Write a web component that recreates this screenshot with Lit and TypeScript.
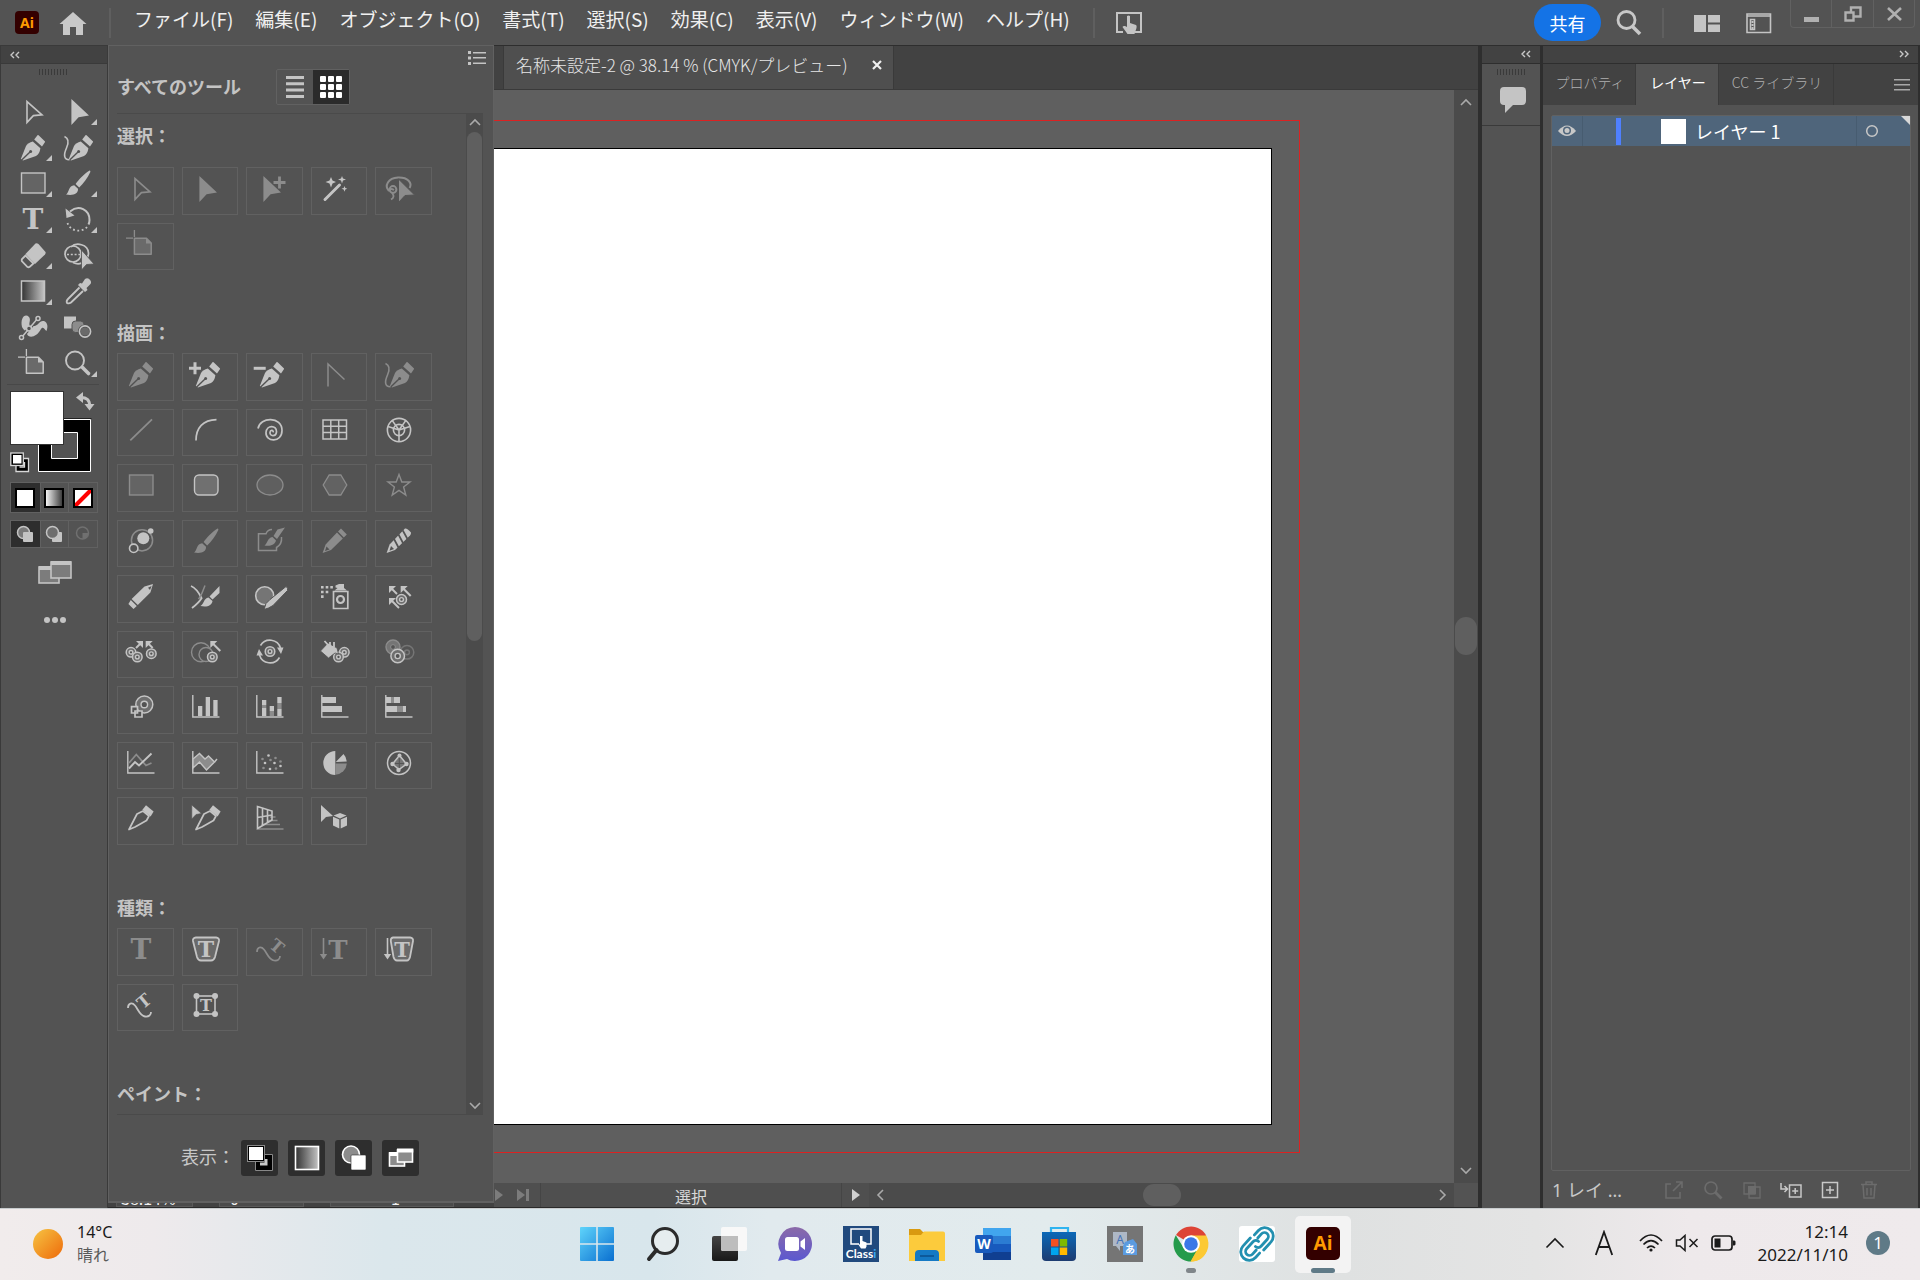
import { LitElement, html, svg, css, nothing, type SVGTemplateResult } from "lit";
import { customElement, property, state } from "lit/decorators.js";
import { classMap } from "lit/directives/class-map.js";

/* ------------------------------------------------------------------ */
/* Icon shapes, drawn in a 36 x 36 box with currentColor               */
/* ------------------------------------------------------------------ */

const penAt = (dx: number) => svg`<g transform="translate(${dx} 0)">
  <path fill="currentColor" d="M22.5 6.2Q23 5.8 23.6 6.3L29.8 12.2Q30.3 12.8 29.9 13.3L27 17.4L19.2 10.6z"/>
  <path fill="currentColor" d="M17.8 12.4L25.4 19.2Q24.6 25 21 27L8 31.6L5.8 30L11 17Q13 13.6 17.8 12.4z"/>
  <path stroke="#535353" stroke-width="1.4" d="M6.2 31.6L15 23"/><circle cx="15.6" cy="22.4" r="1.5" fill="#535353"/></g>`;

const ring = (x: number, y: number, r = 4.8) => svg`<circle cx=${x} cy=${y} r=${r} fill="#6e6e6e" stroke="currentColor" stroke-width="1.5"/>
  <circle cx=${x} cy=${y} r=${r / 2.6} fill="#535353" stroke="currentColor" stroke-width="1.4"/>`;

const arrowNW = (x: number, y: number, len = 9) => svg`<path fill="currentColor" d="M${x} ${y}h7l-7 7z"/>
  <path stroke="currentColor" stroke-width="2" d="M${x + 2} ${y + 2}l${len - 2} ${len - 2}"/>`;

const axes = svg`<path fill="none" stroke="currentColor" stroke-width="1.4" d="M4.8 6V28H31.5"/>`;

const glyphT = (x: number, y: number, size: number) =>
  svg`<text x=${x} y=${y} font-size=${size} font-weight="700" font-family="DejaVu Serif, Liberation Serif, serif" text-anchor="middle" fill="currentColor">T</text>`;

const brush = svg`<path fill="currentColor" d="M29.6 5.4C30.4 5.6 30.6 6.4 30.2 7.2C27.6 13 23.4 18.6 19.2 22.4L15.6 19C18.8 14.4 24.4 8.6 29.6 5.4z"/>
  <path fill="currentColor" d="M14.2 20.2L18 23.8C18.4 28.6 13.6 31 6 29.6C9 27.6 8.6 20.6 14.2 20.2z"/>`;

const knife = (dx: number) => svg`<g transform="translate(${dx} 0)">
  <path fill="none" stroke="currentColor" stroke-width="1.7" stroke-linejoin="round" d="M6 29.5L14 14L20 11L26 16L23.5 20.5L12 27z"/>
  <path fill="currentColor" d="M23 5.2L30.6 11.4L27.6 16.6L19.4 9.8z"/></g>`;

const cursor = svg`<path fill="currentColor" d="M11.4 6V32L18.6 24.2L29 22.4z"/>`;

const windows = svg`<rect x="2" y="12" width="20" height="16" fill="#7c7c7c" stroke="currentColor" stroke-width="1.6"/>
  <path fill="currentColor" d="M2 11h20v4h-20z"/>
  <rect x="14" y="7" width="20" height="16" fill="#7c7c7c" stroke="currentColor" stroke-width="1.6"/><path fill="currentColor" d="M14 6h20v4h-20z"/>`;

const artboard = svg`<path fill="none" stroke="currentColor" stroke-width="1.3" d="M3 12.2H10M11.4 4V11"/>
  <path fill="#6a6a6a" stroke="currentColor" stroke-width="1.5" stroke-linejoin="round" d="M11.4 12.2H23.5L28.2 17V28.2H11.4z"/><path fill="currentColor" d="M23 12V17.5H28.5z"/>`;

const SHAPES: Record<string, SVGTemplateResult> = {
  select: svg`<path fill="none" stroke="currentColor" stroke-width="1.6" d="M12 8.6V29.4L18.4 22.6L27 21.8z"/>`,
  direct: cursor,
  group: svg`${cursor}<path stroke="currentColor" stroke-width="2.8" d="M21.5 12.5h12M27.5 6.5v12"/>`,
  wand: svg`<path stroke="currentColor" stroke-width="3" stroke-linecap="round" d="M8 29.5L22.5 15"/>
    <path fill="currentColor" d="M14 7l1.5 3.5l3.5 1.5l-3.5 1.5l-1.5 4l-1.5-4l-4-1.5l4-1.5zM25 6l1 2.5l3 1l-3 1l-1 3l-1-3l-3-1l3-1zM27.5 16l.8 2l2 .8l-2 .8l-.8 2.2l-.8-2.2l-2.2-.8l2.2-.8z"/>`,
  lasso: svg`<path fill="none" stroke="currentColor" stroke-width="2" d="M8 21C3 16 7 8 17 7.6C27 7.2 31.5 13 28.6 18"/>
    <circle cx="12" cy="19.5" r="3.4" fill="none" stroke="currentColor" stroke-width="2"/><path fill="none" stroke="currentColor" stroke-width="1.8" d="M11 23Q14.5 27 10 29.5M7 20Q10 18 13 20"/>
    <path fill="currentColor" stroke="#535353" d="M17.5 9V32.5L24 25.5L33.6 25z"/>`,
  artboard,
  pen: penAt(0),
  penAdd: svg`${penAt(2)}<path stroke="currentColor" stroke-width="3" d="M1 12.3h12M7 6.3v12"/>`,
  penRemove: svg`${penAt(2)}<path stroke="currentColor" stroke-width="3" d="M1.7 12.3h12"/>`,
  anchor: svg`<path fill="none" stroke="currentColor" stroke-width="1.5" d="M11 30.5V8L27.5 23.5"/>`,
  curvature: svg`${penAt(3)}<path fill="none" stroke="currentColor" stroke-width="1.6" d="M4.5 7.5C9 9.5 8.5 14.5 6.5 19C3.6 25.5 3.6 31 9.5 30.8"/>`,
  line: svg`<path stroke="currentColor" stroke-width="1.8" d="M7.3 28.3L29 7.3"/>`,
  arc: svg`<path fill="none" stroke="currentColor" stroke-width="1.7" d="M8 28.5C8 16 15 7.8 28.5 7.6"/>`,
  spiral: svg`<path fill="none" stroke="currentColor" stroke-width="1.7" d="M6 16.5C8 4.5 30 4 30 18.5C30 31 13.5 30.5 14 20.5C14.5 12.5 25 13 24.5 19.8C24 25 17.6 24.5 18 20.4C18.4 17.5 21.6 18 21.2 20.4"/>`,
  grid: svg`<path fill="none" stroke="currentColor" stroke-width="1.5" d="M6 8H29.5V27H6zM13.8 8V27M21.7 8V27M6 14.3H29.5M6 20.6H29.5"/>`,
  polar: svg`<g fill="none" stroke="currentColor" stroke-width="1.6"><circle cx="18" cy="18" r="11.6"/><circle cx="18" cy="18" r="5.6"/><path d="M18 18V29.5M18 18L7 14.5M18 18L29 14.5M18 18L11.3 8.6M18 18L24.7 8.6"/></g>`,
  rect: svg`<rect x="6.5" y="8" width="23.5" height="20" fill="#646464" stroke="currentColor" stroke-width="1.4"/>`,
  rrect: svg`<rect x="6.5" y="8" width="23.5" height="20" rx="4.5" fill="#707070" stroke="currentColor" stroke-width="1.4"/>`,
  ellipse: svg`<ellipse cx="18" cy="18" rx="13" ry="10" fill="#5f5f5f" stroke="currentColor" stroke-width="1.3"/>`,
  polygon: svg`<path fill="#626262" stroke="currentColor" stroke-width="1.3" d="M12.2 8H23.8L29.8 18L23.8 28H12.2L6.2 18z"/>`,
  star: svg`<path fill="none" stroke="currentColor" stroke-width="1.4" d="M18 7.4L20.8 15H29L22.6 20L24.8 28L18 23.4L11.2 28L13.4 20L7 15H15.2z"/>`,
  flare: svg`<circle cx="19" cy="17.3" r="10.6" fill="none" stroke="#8c8c8c" stroke-width="1.5"/><circle cx="20.3" cy="15.3" r="6" fill="currentColor"/><circle cx="27.7" cy="8" r="2.8" fill="currentColor"/><circle cx="10.7" cy="25.3" r="4.2" fill="#535353" stroke="currentColor" stroke-width="1.6"/>`,
  brush,
  blobBrush: svg`<path fill="none" stroke="currentColor" stroke-width="1.5" d="M20 6.5C17 6.5 15 8 14 10.7H6.5V27.5H24.5V24.5C28 22.5 30 19 29.5 14"/>
    <path fill="currentColor" d="M33 4.5L25 16L21.5 13L25.5 6.5zM20.5 14L24 17.5C23 22 18 23.5 12.5 22.5C16 20 15 15 20.5 14z"/>`,
  pencil: svg`<path fill="currentColor" d="M24 5.6L29.8 11.4L26.8 14.4L21 8.6zM20 9.6L25.8 15.4L14 27L5.6 30L8.6 21.4z"/><path fill="#535353" d="M9.5 23.5L12.5 26.5L8 28z"/>`,
  crayon: svg`<path fill="currentColor" d="M24 5.6Q26 5 30 9.5Q30.3 11 29 12.4L14 27L5.6 30L8.6 21.4z"/>
    <path stroke="#535353" stroke-width="1.7" d="M13 16L17.5 24.5M17.5 11.5L22 20M21.8 7.5L26.5 16"/><path fill="#535353" d="M10 23L13 26L8.5 27.8z"/>`,
  eraserPath: svg`<path fill="currentColor" d="M30 6L27.4 14.6L14.8 27L8.6 21L21.500 8.600zM7.8 22L13.8 28L10.5 31L5.4 26z"/><path fill="#535353" d="M25 9.800L28.6 8L27 12z"/>`,
  join: svg`<path fill="none" stroke="currentColor" stroke-width="1.8" d="M3 8C8 10 11 15 13.5 20M4 30C8 27 12 23 14 19.5"/><path fill="none" stroke="#8c8c8c" stroke-width="1.5" d="M17 7.5C15 12 14 17 10.5 21"/>
    <path fill="currentColor" d="M31.5 8V15L24.5 21.5L21.5 18.5zM20.5 19.5L24.5 23C24 27.5 19 29.5 12.5 28C16 26 15.5 20.5 20.5 19.5z"/>`,
  shaper: svg`<circle cx="12.7" cy="17.8" r="9" fill="#757575" stroke="currentColor" stroke-width="1.6"/>
    <path fill="currentColor" stroke="#535353" d="M34 8.5Q36.5 10 35.5 12.5L21 27.5L16.5 30L12 31.5L14 25.5L18 21.5z"/>`,
  spray: svg`<path fill="none" stroke="currentColor" stroke-width="1.7" d="M16.5 13.5H30.8V30.5H16.5z"/><path fill="currentColor" d="M18.5 7.5L22 6H27V10L30 12.5H17.5L20.5 10L18.5 9.5z"/>
    <circle cx="23.5" cy="21.5" r="3.5" fill="none" stroke="currentColor" stroke-width="2.2"/>
    <path fill="currentColor" d="M4 8h2.6v2.6h-2.6zM8.7 8h2.6v2.6h-2.6zM13.3 8h2.6v2.6h-2.6zM4 12.7h2.6v2.6h-2.6zM8.7 12.7h2.6v2.6h-2.6zM4 17.3h2.6v2.6h-2.6z"/>`,
  shifter: svg`${arrowNW(8, 8, 8)}${arrowNW(19.7, 8, 10)}${arrowNW(8, 20, 10)}${ring(20.5, 21.5, 5)}`,
  scruncher: svg`${ring(8, 18.3)}${ring(14.3, 23)}${ring(28.3, 19.7)}${arrowNW(22.7, 7, 7)}<g transform="translate(42.7 0) scale(-1 1)">${arrowNW(22.7, 7, 7)}</g>`,
  sizer: svg`<g fill="#535353" stroke="#8c8c8c" stroke-width="1.4"><circle cx="13" cy="18.3" r="9.5"/><circle cx="18" cy="20.5" r="7"/></g>${ring(24.3, 23)}${arrowNW(22.3, 7, 10)}`,
  spinner: svg`${ring(18, 17.5)}<path fill="none" stroke="currentColor" stroke-width="1.6" d="M8.5 11.5A11 11 0 0 1 28.5 14M27.5 23.5A11 11 0 0 1 7.5 21"/><path fill="currentColor" d="M25 13.5H31.5L29 20zM11 21.5H4.5L7 15z"/>`,
  stainer: svg`${ring(27.3, 18.3)}${ring(21.5, 23)}<path fill="currentColor" stroke="#535353" stroke-width=".8" d="M11 9L20 14L21.5 20L18 19L11.5 24L3.5 17z"/><path fill="none" stroke="currentColor" stroke-width="1.8" d="M7.5 7L12 12M13 8V12M17 8L17 13"/>`,
  screener: svg`<circle cx="26" cy="18.3" r="6.8" fill="none" stroke="#757575" stroke-width="1.5"/><circle cx="26" cy="18.3" r="2.4" fill="none" stroke="#757575" stroke-width="1.5"/>
    <circle cx="12" cy="13" r="7" fill="#757575" stroke="#8c8c8c" stroke-width="1.4"/><circle cx="12" cy="13" r="2.4" fill="#535353" stroke="#8c8c8c"/>${ring(16.7, 22, 6.8)}`,
  styler: svg`${ring(21.3, 15.5, 8.5)}<path fill="#535353" stroke="currentColor" stroke-width="1.7" d="M12 22H19V28H12zM8.5 17.7H14.5V24H8.5z"/>`,
  bars: svg`${axes}<path fill="currentColor" d="M10 17h4.3v10h-4.3zM17.7 8h4.3v19h-4.3zM25.3 11h4.3v16h-4.3z"/>`,
  stackBars: svg`${axes}<path fill="currentColor" d="M10 11h4.3v5h-4.3zM10 19h4.3v8h-4.3zM17.7 17h4.3v5h-4.3zM25.3 8h4.3v6h-4.3zM25.3 20h4.3v7h-4.3z"/><path fill="#8c8c8c" d="M10 16h4.3v3h-4.3zM17.7 22h4.3v5h-4.3zM25.3 14h4.3v6h-4.3z"/>`,
  hbars: svg`${axes}<path fill="currentColor" d="M5 8h14v6h-14zM5 17h20v6h-20z"/>`,
  stackHbars: svg`${axes}<path fill="currentColor" d="M5 8h5v6h-5zM13 8h6v6h-6zM5 17h11v6h-11zM22 17h3v6h-3z"/><path fill="#8c8c8c" d="M10 8h3v6h-3zM16 17h6v6h-6z"/>`,
  lineChart: svg`${axes}<path fill="none" stroke="#8c8c8c" stroke-width="1.8" d="M6 18L13.3 9.5L23 20.5L28.5 18"/><path fill="none" stroke="currentColor" stroke-width="1.9" d="M6 23.5L12 17L16 20.5L28.5 8.5"/>`,
  areaChart: svg`${axes}<path fill="#8c8c8c" stroke="currentColor" stroke-width="1.4" d="M5 14L11.5 8.5L17 14L20.5 11L26.5 17L18.5 25L11.5 17L5 23z"/><path stroke="currentColor" stroke-width="1.4" d="M26.5 17L29 14"/>`,
  scatter: svg`${axes}<g fill="currentColor"><circle cx="16.5" cy="10.5" r="1.3"/><circle cx="22.5" cy="18" r="1.3"/><circle cx="18" cy="24" r="1.3"/><circle cx="28.5" cy="21" r="1.3"/><circle cx="13" cy="18" r="1.3"/></g><g fill="#8c8c8c"><circle cx="10.5" cy="14" r="1.3"/><circle cx="18.5" cy="15" r="1.3"/><circle cx="23.5" cy="13" r="1.3"/><circle cx="28.5" cy="16.5" r="1.3"/><circle cx="11.5" cy="23" r="1.3"/><circle cx="24" cy="23.5" r="1.3"/></g>`,
  pie: svg`<path fill="currentColor" d="M18.3 6A12 12 0 0 0 18.3 30zM18.8 17L26.5 9A12 12 0 0 1 29.8 16.5z"/><path fill="#8c8c8c" d="M18.3 18.5L29.8 18.5A12 12 0 0 1 18.3 29.8z"/>`,
  radar: svg`<circle cx="18" cy="18" r="11.5" fill="none" stroke="currentColor" stroke-width="1.5"/><path fill="#757575" stroke="currentColor" stroke-width="1.5" d="M18.5 10.5L25.5 19L18 24.5L11.5 19z"/><path stroke="#535353" d="M18.3 12V23M13 18.5H24"/><g fill="currentColor"><circle cx="18.5" cy="10.5" r="2"/><circle cx="25.5" cy="19" r="2.2"/><circle cx="17.5" cy="25" r="2.2"/><circle cx="11.5" cy="19" r="2.2"/></g>`,
  slice: knife(0),
  sliceSelect: svg`${knife(2)}<path fill="currentColor" stroke="#535353" stroke-width=".6" d="M3.8 5V19L8 14.5L13.5 13.5z"/>`,
  perspective: svg`<path fill="none" stroke="#8c8c8c" stroke-width="1.4" d="M6 29H31.5M9.5 24.5H28M15 20.5H25.5M18 17H23.5"/><path fill="none" stroke="currentColor" stroke-width="1.6" d="M5.5 6.5L20 11V20L5.5 28.5zM10.5 8.5V25M15.5 10V22M5.5 17.5L20 15"/>`,
  perspectiveSelect: svg`<path fill="currentColor" d="M4 5V22L9 17L16 16z"/><path fill="currentColor" d="M23 13L29.5 15.5L23 18.5L16.5 15.5zM16 16.7L22.3 19.5V28.5L16 25.5zM30 16.7L23.7 19.5V28.5L30 25.5z"/>`,
  type: glyphT(18, 28, 28),
  areaType: svg`<path fill="#6a6a6a" stroke="currentColor" stroke-width="1.8" stroke-linejoin="round" d="M8 6.5H28Q31.5 7 31 10L27 26Q26 29.5 23 29.5H13Q10 29.5 9 26L5 10Q4.5 7 8 6.5z"/>${glyphT(18, 26, 22)}`,
  pathType: svg`<g transform="rotate(40 23 16)">${glyphT(24, 20, 17)}</g><path fill="none" stroke="currentColor" stroke-width="1.7" d="M5 21C5 16 9 15 12 18.5C15 22 17 29 22 29.5C26 30 28 28 28 25"/>`,
  vType: svg`<path stroke="currentColor" stroke-width="1.6" d="M6.5 7V25"/><path fill="currentColor" d="M2.8 23h7.4l-3.7 5.5z"/>${glyphT(21, 28, 26)}`,
  vAreaType: svg`<path stroke="currentColor" stroke-width="1.6" d="M6.5 7V25"/><path fill="currentColor" d="M2.8 23h7.4l-3.7 5.5z"/>
    <path fill="#6a6a6a" stroke="currentColor" stroke-width="1.8" stroke-linejoin="round" d="M12 6.5H29Q32.5 7 32 10L29 26Q28 29.5 26 29.5H16Q13.5 29.5 12.5 26L9.8 10Q9.5 7 12 6.5z"/>${glyphT(21, 26, 21)}`,
  vPathType: svg`<g transform="rotate(-40 21 14)">${glyphT(21, 20, 17)}</g><path fill="none" stroke="currentColor" stroke-width="1.8" d="M5 21C5 16 9 15 12 18.5C15 22 17 29 22 29.5C26 30 28 28 28 25"/>`,
  touchType: svg`<rect x="8.5" y="9" width="18.5" height="18" fill="none" stroke="currentColor" stroke-width="1.6"/><g fill="currentColor"><circle cx="8.5" cy="9" r="3"/><circle cx="27" cy="9" r="3"/><circle cx="8.5" cy="27" r="3"/><circle cx="27" cy="27" r="3"/></g>${glyphT(18, 24, 16)}`,
  rotate: svg`<path fill="none" stroke="currentColor" stroke-width="2" d="M10 10.5C19 3 29.5 9 29.5 19C29.5 21 29 22.5 28.5 23.5"/><path fill="currentColor" d="M5.5 7.5L14.5 14.5L6.5 17z"/><path fill="none" stroke="currentColor" stroke-width="1.8" stroke-dasharray="1.8 2.6" d="M27 26C22 32 9 31 7 20"/>`,
  eraser: svg`<path fill="currentColor" d="M20.5 6.5Q22 6 23.5 7L30.5 15Q31 16 30 17.5L20 27L10.5 17z"/><path fill="none" stroke="currentColor" stroke-width="1.8" d="M10.5 18.5L18.5 26.5L14.5 30Q13.5 30.5 12.5 30L6.8 24Q6.5 23 7 22z"/>`,
  shapeBuilder: svg`<circle cx="13" cy="17" r="8" fill="none" stroke="currentColor" stroke-width="1.7"/><path fill="none" stroke="currentColor" stroke-width="1.7" d="M11 10C16 5 28 7 28.5 16Q28.5 21 24.5 24M13 25.5Q18 28 21.5 26"/><path stroke="currentColor" stroke-width="1.7" stroke-dasharray="2 1.8" d="M7 17.5H22"/><path fill="currentColor" stroke="#535353" stroke-width=".8" d="M21.5 13V33L26.5 27.5L34 27z"/>`,
  gradient: svg`<rect x="6.5" y="8" width="23" height="20" fill="url(#grad)" stroke="currentColor" stroke-width="1.5"/>`,
  eyedropper: svg`<path fill="currentColor" d="M25 6Q28 4 30.5 7.5Q32 10 29.5 12L26.5 15L27.5 17L25 19L18 12L20 10L22 10.5z"/><path fill="none" stroke="currentColor" stroke-width="1.8" stroke-linejoin="round" d="M19.5 14.5L8 26Q6 28 7 30Q9 31 11 29.5L23 18"/>`,
  puppet: svg`<path fill="currentColor" d="M7 18C5 9 10 4 14 8C17 12 11 17 18 17C24 17 24 11 29 12C33 14 33 18 31.5 22C29 20 28 17 26 20C22 28 14 30 12 25C11 21 9 22 7 18z"/><path stroke="#535353" stroke-width="3.5" d="M7 28L23 9"/><path stroke="currentColor" stroke-width="1.5" d="M7 28L23 9"/><g fill="#535353" stroke="currentColor" stroke-width="1.5"><circle cx="23" cy="9.5" r="2"/><circle cx="14" cy="19.5" r="2.5"/><circle cx="6.5" cy="28.5" r="2"/></g>`,
  blend: svg`<rect x="4" y="7.5" width="12" height="12" fill="currentColor"/><rect x="12" y="12" width="12" height="11.5" rx="3.5" fill="#8c8c8c" stroke="#535353"/><circle cx="25" cy="22.5" r="5.6" fill="#6a6a6a" stroke="#535353" stroke-width="3"/><circle cx="25" cy="22.5" r="5.6" fill="none" stroke="currentColor" stroke-width="1.6"/>`,
  zoom: svg`<circle cx="15" cy="15.5" r="9" fill="none" stroke="currentColor" stroke-width="1.9"/><path stroke="currentColor" stroke-width="3.6" stroke-linecap="round" d="M22.5 22.5L28.5 28.5"/>`,
  windows,
};

const gradDef = svg`<defs><linearGradient id="grad"><stop offset="0" stop-color="#333"/><stop offset="1" stop-color="#c4c4c4"/></linearGradient></defs>`;

const icon = (name: string) =>
  html`<svg width="36" height="36" viewBox="0 0 36 36" fill="none" aria-hidden="true">${name === "gradient" ? gradDef : nothing}${SHAPES[name]}</svg>`;

const chevron = (dir: "up" | "down" | "left" | "right") => {
  const d = { up: "M3 10L8 5L13 10", down: "M3 6L8 11L13 6", left: "M10 3L5 8L10 13", right: "M6 3L11 8L6 13" }[dir];
  return html`<svg width="16" height="16" viewBox="0 0 16 16" aria-hidden="true"><path d=${d} fill="none" stroke="#aaa" stroke-width="1.6"/></svg>`;
};

const grip = html`<svg class="grip" width="30" height="6" viewBox="0 0 30 6" aria-hidden="true">
  <path stroke="#3a3a3a" stroke-width="6" stroke-dasharray="1 2" d="M1 3H29"/></svg>`;

const doubleChevron = (flip = false) => html`<svg width="12" height="8" viewBox="0 0 12 8" aria-hidden="true">
  <path d=${flip ? "M2 1L5 4L2 7M7 1L10 4L7 7" : "M5 1L2 4L5 7M10 1L7 4L10 7"} fill="none" stroke="#c8c8c8" stroke-width="1.4"/></svg>`;

/* Shared control reset and tokens */
const base = css`
  :host {
    --bg: #535353;
    --dark: #424242;
    --line: #3a3a3a;
    --edge: #616161;
    --fg: #c4c4c4;
    --dim: #8c8c8c;
    box-sizing: border-box;
    font-family: "Noto Sans CJK JP", "Noto Sans", sans-serif;
    color: #e6e6e6;
  }
  *, *::before, *::after { box-sizing: border-box; }
  button, input, a {
    margin: 0; padding: 0; border: 0; background: none;
    color: inherit; font: inherit; text-decoration: none;
  }
  button { cursor: pointer; display: grid; place-items: center; }
  svg { display: block; flex: none; }
  h2, h3 { margin: 0; padding: 0; font: inherit; }
`;

/* ------------------------------------------------------------------ */
@customElement("menu-bar")
class MenuBar extends LitElement {
  static styles = [base, css`
    :host { display: flex; align-items: flex-start; height: 45px; background: var(--bg); padding-left: 15px; }
    .logo { width: 24px; height: 23px; margin: 11px 0 0; border-radius: 4px; background: #330000; color: #ff9a00;
      display: grid; place-items: center; font: 700 14px/1 "Noto Sans", sans-serif; }
    .home { margin: 11px 0 0 20px; }
    .sep { width: 2px; height: 30px; margin-top: 8px; background: #5f5f5f; }
    .sep.a { margin-left: 22px; }
    nav { display: flex; gap: 22px; margin-left: 23px; }
    nav button { font-size: 19px; line-height: 38px; white-space: nowrap; color: #f0f0f0; }
    .sep.b { margin-left: 23px; }
    .touch { margin: 11px 0 0 20px; }
    .grow { flex: 1; }
    .share { height: 37px; width: 67px; margin-top: 4px; border-radius: 19px; background: #1473e6; color: #fff; font-size: 18px; line-height: 36px; }
    .search { margin: 9px 20px 0 14px; }
    .arrange { margin: 13px 0 0 30px; }
    .switch { margin: 12px 18px 0 26px; }
    .win { display: flex; width: 125px; height: 28px; margin-right: 5px; border: 1px solid var(--edge); border-top: 0; border-radius: 0 0 4px 4px; }
    .win button { flex: 1; }
    .win button + button { border-left: 1px solid var(--edge); }
  `];
  private items = ["ファイル(F)", "編集(E)", "オブジェクト(O)", "書式(T)", "選択(S)", "効果(C)", "表示(V)", "ウィンドウ(W)", "ヘルプ(H)"];
  render() {
    return html`
      <span class="logo">Ai</span>
      <button class="home" aria-label="ホーム"><svg width="28" height="24" viewBox="0 0 28 24"><path fill="#c8c8c8" d="M14 1L27.5 13H24V24H17V16H11V24H4V13H.5z"/></svg></button>
      <span class="sep a"></span>
      <nav>${this.items.map((t) => html`<button>${t}</button>`)}</nav>
      <span class="sep b"></span>
      <button class="touch" aria-label="タッチ"><svg width="28" height="24" viewBox="0 0 28 24"><path fill="none" stroke="#c4c4c4" stroke-width="2" d="M8 21H2V2H26V21H20"/><path fill="#c4c4c4" d="M12 5Q13.5 4 15 5V12L21 14Q22 14.5 21.5 17L19.5 23H12.5L7.5 16Q8 14.5 10 15L12 16z"/></svg></button>
      <span class="grow"></span>
      <button class="share">共有</button>
      <button class="search" aria-label="検索"><svg width="27" height="27" viewBox="0 0 27 27"><circle cx="11.5" cy="11" r="8.5" fill="none" stroke="#c8c8c8" stroke-width="2.8"/><path stroke="#c8c8c8" stroke-width="3.6" d="M17.5 17.5L25 25"/></svg></button>
      <span class="sep"></span>
      <button class="arrange" aria-label="ドキュメントの配置"><svg width="26" height="20" viewBox="0 0 26 20"><path fill="#c4c4c4" d="M0 2H12V19H0zM14 2H26V9.5H14zM14 11.5H26V19H14z"/></svg></button>
      <button class="switch" aria-label="ワークスペース"><svg width="26" height="22" viewBox="0 0 26 22"><path fill="none" stroke="#c4c4c4" stroke-width="1.6" d="M1 2H24.5V20.5H1zM1 4H24.5M4.5 7.5H8.5V17.5H4.5z"/><path fill="#c4c4c4" d="M5.5 9h2v2h-2zM5.5 12h2v2h-2zM5.5 15h2v2h-2z"/></svg></button>
      <div class="win">
        <button aria-label="最小化"><svg width="20" height="18" viewBox="0 0 20 18"><path fill="#b0b0b0" d="M3 12h15v5H3z"/></svg></button>
        <button aria-label="元に戻す"><svg width="20" height="18" viewBox="0 0 20 18"><path fill="none" stroke="#b0b0b0" stroke-width="2.4" d="M3.5 7.5H11.5V15.5H3.5zM9 7V2.5H18.5V11.5H12"/></svg></button>
        <button aria-label="閉じる"><svg width="20" height="18" viewBox="0 0 20 18"><path stroke="#b0b0b0" stroke-width="2.6" d="M4 3L17 15M17 3L4 15"/></svg></button>
      </div>`;
  }
}

/* ------------------------------------------------------------------ */
@customElement("tool-bar")
class ToolBar extends LitElement {
  static styles = [base, css`
    :host { display: flex; flex-direction: column; width: 108px; background: var(--bg); border: 1px solid var(--line); border-bottom: 0; }
    .head { height: 18px; background: var(--dark); border-bottom: 1px solid var(--line); padding: 5px 0 0 8px; display: flex; align-items: flex-start; }
    .grip { margin: 5px 0 18px 37px; }
    .tools { display: grid; grid-template-columns: 45px 45px; grid-auto-rows: 36px; margin-left: 14px; color: var(--fg); }
    .tools button { position: relative; justify-items: start; }
    .more::after { content: ""; position: absolute; left: 31px; top: 26px; border-left: 6px solid transparent; border-bottom: 6px solid var(--fg); }
    hr { width: 92px; margin: 3px 0 5px 6px; border: 0; border-top: 1px solid #484848; }
    .colors { margin-left: 9px; }
    .modes { display: grid; grid-template-columns: repeat(3, 1fr); width: 88px; border: 1px solid var(--edge); margin: 8px 0 0 9px; height: 31px; }
    .modes.small { height: 28px; margin-top: 7px; }
    .modes button + button { border-left: 1px solid var(--edge); }
    .modes .on { background: #2e2e2e; }
    .screen { margin: 7px 0 0 36px; width: 36px; color: var(--fg); }
    .dots { margin: 25px 0 0 42px; width: 24px; }
  `];
  private tools: [string, string, boolean][] = [
    ["select", "選択ツール", false], ["direct", "ダイレクト選択ツール", true],
    ["pen", "ペンツール", true], ["curvature", "曲線ツール", false],
    ["rect", "長方形ツール", true], ["brush", "ブラシツール", true],
    ["type", "文字ツール", true], ["rotate", "回転ツール", true],
    ["eraser", "消しゴムツール", true], ["shapeBuilder", "シェイプ形成ツール", false],
    ["gradient", "グラデーションツール", true], ["eyedropper", "スポイトツール", false],
    ["puppet", "パペットワープツール", false], ["blend", "ブレンドツール", false],
    ["artboard", "アートボードツール", false], ["zoom", "ズームツール", true],
  ];
  render() {
    return html`
      <div class="head">${doubleChevron()}</div>
      ${grip}
      <div class="tools">${this.tools.map(([n, label, more]) => html`<button class=${classMap({ more })} aria-label=${label}>${icon(n)}</button>`)}</div>
      <hr />
      <svg class="colors" width="88" height="84" viewBox="0 0 88 84" role="img" aria-label="塗りと線">
        <path fill="#000" stroke="#fff" fill-rule="evenodd" d="M28.5 29.5H80.5V81.5H28.5zM41.5 42.5H67.5V68.5H41.5z"/>
        <path fill="none" stroke="#222" d="M27.5 28.5H81.5"/>
        <rect x=".5" y="1.5" width="53" height="53" fill="#fff" stroke="#333"/>
        <path fill="none" stroke="#c4c4c4" stroke-width="3" d="M70 7.5Q80 7 79.5 16"/><path fill="#c4c4c4" d="M73 2V13L66 7.5zM74.5 14H84.5L79.5 20.5z"/>
        <path fill="#000" stroke="#d8d8d8" stroke-width="1.3" d="M6 68.5H18.5V81.5H6z"/><rect x=".8" y="63" width="12.5" height="12.5" fill="#000" stroke="#d8d8d8" stroke-width="1.3"/><rect x="3" y="65" width="8.5" height="8.5" fill="#fff"/><path fill="none" stroke="#d8d8d8" stroke-width="1.3" d="M14.5 72V77H9.5"/>
      </svg>
      <div class="modes">
        <button class="on" aria-label="カラー"><svg width="20" height="20"><rect x="1" y="1" width="18" height="18" fill="#fff" stroke="#000" stroke-width="2"/></svg></button>
        <button aria-label="グラデーション"><svg width="20" height="20"><defs><linearGradient id="g2"><stop offset="0" stop-color="#fff"/><stop offset="1" stop-color="#333"/></linearGradient></defs><rect x="1" y="1" width="18" height="18" fill="url(#g2)" stroke="#000" stroke-width="2"/></svg></button>
        <button aria-label="なし"><svg width="20" height="20"><rect x="1" y="1" width="18" height="18" fill="#fff"/><path stroke="#f00" stroke-width="4" d="M2 18L18 2"/><rect x="1" y="1" width="18" height="18" fill="none" stroke="#000" stroke-width="2"/></svg></button>
      </div>
      <div class="modes small">
        <button class="on" aria-label="標準描画"><svg width="18" height="18"><circle cx="7.5" cy="7.5" r="6" fill="#7a7a7a" stroke="#c4c4c4" stroke-width="1.5"/><rect x="7" y="7" width="10" height="10" rx="1" fill="#c4c4c4"/></svg></button>
        <button aria-label="背面描画"><svg width="18" height="18"><rect x="7" y="7" width="10" height="10" rx="1" fill="#c4c4c4"/><circle cx="7.5" cy="7.5" r="6" fill="#6e6e6e" stroke="#c4c4c4" stroke-width="1.5"/></svg></button>
        <button aria-label="内側描画"><svg width="18" height="18"><circle cx="8.5" cy="8" r="6" fill="none" stroke="#707070" stroke-width="1.5"/><path fill="#707070" d="M8.5 8H14.5A6 6 0 0 1 8.5 14z"/></svg></button>
      </div>
      <button class="screen" aria-label="スクリーンモード">${icon("windows")}</button>
      <button class="dots" aria-label="ツールバーを編集"><svg width="24" height="8"><circle cx="4" cy="4" r="3" fill="#c4c4c4"/><circle cx="12" cy="4" r="3" fill="#c4c4c4"/><circle cx="20" cy="4" r="3" fill="#c4c4c4"/></svg></button>`;
  }
}

/* ------------------------------------------------------------------ */
/* "-" before a name marks a tool that is already in the toolbar       */
const GROUPS: { title: string; tools: string[] }[] = [
  { title: "選択：", tools: ["-select", "-direct", "-group", "wand", "-lasso", "-artboard"] },
  { title: "描画：", tools: [
    "-pen", "penAdd", "penRemove", "-anchor", "-curvature",
    "-line", "arc", "spiral", "grid", "polar",
    "-rect", "rrect", "-ellipse", "-polygon", "-star",
    "flare", "-brush", "-blobBrush", "-pencil", "crayon",
    "eraserPath", "join", "shaper", "spray", "shifter",
    "scruncher", "sizer", "spinner", "stainer", "screener",
    "styler", "bars", "stackBars", "hbars", "stackHbars",
    "lineChart", "areaChart", "scatter", "pie", "radar",
    "slice", "sliceSelect", "perspective", "perspectiveSelect"] },
  { title: "種類：", tools: ["-type", "areaType", "-pathType", "-vType", "vAreaType", "vPathType", "touchType"] },
  { title: "ペイント：", tools: [] },
];

@customElement("all-tools")
class AllTools extends LitElement {
  @state() private view: "list" | "grid" = "grid";
  static styles = [base, css`
    :host { display: flex; flex-direction: column; background: var(--bg); border: 1px solid var(--edge); border-width: 1px 1px 2px; padding: 0 10px 0 8px; }
    .opts { align-self: flex-end; margin: 5px -3px 0 0; }
    .top { display: flex; align-items: center; height: 36px; margin-top: 4px; color: var(--fg); }
    h2 { width: 159px; font-size: 18px; font-weight: 700; line-height: 34px; padding-bottom: 2px; }
    .toggle { display: flex; border: 1px solid var(--edge); border-radius: 2px; }
    .toggle button { width: 36px; height: 34px; }
    .toggle .on { background: #2b2b2b; color: #fff; }
    .body { flex: 1; min-height: 0; display: flex; margin-top: 8px; border: 1px solid #4a4a4a; border-width: 1px 0; }
    .scroll { flex: 1; overflow: hidden; }
    h3 { font-size: 18px; font-weight: 700; line-height: 26px; color: var(--fg); }
    section { padding-top: 49px; }
    section:first-child { padding-top: 8px; }
    .cells { display: grid; grid-template-columns: repeat(5, 1fr); gap: 8px; width: 315px; margin-top: 8px; }
    section:first-child .cells { margin-top: 19px; }
    .cell { aspect-ratio: 25 / 21; border: 1px solid var(--edge); color: var(--fg); place-items: start; padding: 2px 0 0 5px; }
    .cell.dim { color: var(--dim); }
    .bar { width: 17px; background: #4b4b4b; display: flex; flex-direction: column; align-items: center; }
    .bar button { height: 18px; width: 16px; }
    .thumb { flex: 508; width: 15px; border-radius: 8px; background: #5f5f5f; }
    .rest { flex: 454; }
    .foot { display: flex; align-items: center; height: 86px; padding: 0 0 1px 64px; gap: 10px; color: #c8c8c8; font-size: 18px; }
    .foot span { width: 50px; line-height: 32px; padding-bottom: 4px; white-space: nowrap; }
    .foot button { width: 37px; height: 36px; background: #2e2e2e; border-radius: 3px; }
  `];
  render() {
    return html`
      <button class="opts" aria-label="パネルメニュー"><svg width="18" height="14"><path fill="#c4c4c4" d="M0 0h3v3H0zM0 5.5h3v3H0zM0 11h3v3H0zM5 1h13v1.6H5zM5 6h13v1.6H5zM5 11.5h13v1.6H5z"/></svg></button>
      <div class="top">
        <h2>すべてのツール</h2>
        <div class="toggle">
          <button class=${classMap({ on: this.view === "list" })} aria-label="リスト表示" @click=${() => (this.view = "list")}><svg width="18" height="22"><path fill="currentColor" d="M0 0h18v3H0zM0 6.3h18v3H0zM0 12.6h18v3H0zM0 19h18v3H0z"/></svg></button>
          <button class=${classMap({ on: this.view === "grid" })} aria-label="グリッド表示" @click=${() => (this.view = "grid")}><svg width="22" height="22" fill="currentColor">${[0, 8, 16].map((y) => [0, 8, 16].map((x) => svg`<rect x=${x} y=${y} width="6" height="6" rx="1"/>`))}</svg></button>
        </div>
      </div>
      <div class="body">
        <div class="scroll">
          ${GROUPS.map((g) => html`<section>
            <h3>${g.title}</h3>
            <div class="cells">${g.tools.map((t) => {
              const dim = t.startsWith("-");
              const name = dim ? t.slice(1) : t;
              return html`<button class=${classMap({ cell: true, dim })} aria-label=${name}>${icon(name)}</button>`;
            })}</div>
          </section>`)}
        </div>
        <div class="bar">
          <button aria-label="上へ">${chevron("up")}</button>
          <div class="thumb"></div><div class="rest"></div>
          <button aria-label="下へ">${chevron("down")}</button>
        </div>
      </div>
      <div class="foot">
        <span>表示：</span>
        <button aria-label="塗りと線"><svg width="28" height="28"><path fill="#000" stroke="#888" d="M9.5 10.5H26.5V26.5H9.5z"/><path fill="none" stroke="#c8c8c8" stroke-width="3" d="M20 15V20H14"/><rect x="1.5" y="1.5" width="17" height="16" fill="#000" stroke="#888"/><rect x="3" y="3" width="14" height="13" fill="#fff"/></svg></button>
        <button aria-label="カラーモード"><svg width="26" height="26"><defs><linearGradient id="g3"><stop offset="0" stop-color="#333"/><stop offset="1" stop-color="#c4c4c4"/></linearGradient></defs><rect x="1.5" y="1.5" width="23" height="23" fill="url(#g3)" stroke="#fff" stroke-width="1.6"/></svg></button>
        <button aria-label="描画モード"><svg width="28" height="28"><circle cx="11" cy="10.5" r="8.5" fill="#8c8c8c" stroke="#fff" stroke-width="1.6"/><rect x="11" y="11" width="15" height="15" rx="1" fill="#fff" stroke="#2e2e2e" stroke-width=".6"/></svg></button>
        <button aria-label="スクリーンモード"><svg width="28" height="28"><rect x="2.5" y="9" width="15" height="13" fill="#8c8c8c" stroke="#fff" stroke-width="1.6"/><path fill="#fff" d="M2 8h16v4H2z"/><rect x="10.5" y="6" width="15" height="12" fill="#8c8c8c" stroke="#fff" stroke-width="1.6"/><path fill="#fff" d="M10 4.5h16.3v4H10z"/></svg></button>
      </div>`;
  }
}

/* ------------------------------------------------------------------ */
@customElement("document-view")
class DocumentView extends LitElement {
  static styles = [base, css`
    :host { display: flex; flex-direction: column; background: var(--dark); min-width: 0; }
    .tabs { height: 45px; display: flex; border-top: 1px solid #2e2e2e; border-bottom: 1px solid var(--line); padding-left: calc(var(--panel-w) + 9px); }
    .tab { display: flex; align-items: center; width: 391px; padding: 0 9px 6px 12px; background: #4f4f4f; border: 1px solid var(--line); border-width: 0 1px; height: 43px; font-size: 17px; font-weight: 300; white-space: nowrap; }
    .tab a { flex: 1; line-height: 28px; }
    .main { flex: 1; display: flex; min-height: 0; }
    .canvas { flex: 1; min-width: 0; background: #5f5f5f; padding: 30px 154px 30px 0; display: flex; }
    .bleed { flex: 1; border: 1px solid #dc2222; padding: 27px; display: flex; }
    .page { flex: 1; background: #fff; border: 1px solid #000; }
    .vbar { width: 24px; background: #4b4b4b; display: flex; flex-direction: column; }
    .vbar button, .hbar button { height: 26px; width: 24px; }
    .hbar button { height: 24px; }
    .vthumb { height: 38px; width: 22px; align-self: center; border-radius: 11px; background: #5f5f5f; }
    .f1 { flex: 501; } .f2 { flex: 503; }
    .status { height: 25px; display: flex; background: #4f4f4f; border-bottom: 1px solid #2a2a2a; font-size: 16px; }
    .fields { display: flex; width: var(--panel-w); padding-left: 8px; gap: 26px; background: #424242; }
    .fields input { border: 1px solid #5a5a5a; height: 24px; background: #4b4b4b; color: #f0f0f0; min-width: 0; padding: 6px 4px 0; line-height: 16px; }
    .zoom { width: 77px; } .rot { width: 85px; } .ab { width: 124px; }
    .fields .rot { padding-left: 10px; } .fields .ab { padding-left: 60px; }
    .nav { display: flex; align-items: center; width: 47px; gap: 12px; border-right: 1px solid #454545; }
    .cur { width: 301px; text-align: center; line-height: 26px; border-right: 1px solid #454545; color: #d8d8d8; }
    .play { width: 27px; }
    .hbar { flex: 1; display: flex; align-items: center; background: #4b4b4b; }
    .hthumb { width: 38px; height: 22px; border-radius: 11px; background: #5f5f5f; }
    .h1 { flex: 250; } .h2 { flex: 249; }
    .corner { width: 24px; background: var(--bg); }
  `];
  render() {
    return html`
      <div class="tabs"><div class="tab"><a href="#doc">名称未設定-2 @ 38.14 % (CMYK/プレビュー)</a>
        <button aria-label="閉じる"><svg width="14" height="14"><path stroke="#f0f0f0" stroke-width="2.2" d="M3 3L11 11M11 3L3 11"/></svg></button></div></div>
      <div class="main">
        <div class="canvas"><div class="bleed"><div class="page"></div></div></div>
        <div class="vbar">
          <button aria-label="上へ">${chevron("up")}</button><span class="f1"></span><span class="vthumb"></span><span class="f2"></span>
          <button aria-label="下へ">${chevron("down")}</button>
        </div>
      </div>
      <div class="status">
        <div class="fields">
          <input class="zoom" aria-label="ズーム" value="38.14%" />
          <input class="rot" aria-label="回転" value="0" />
          <input class="ab" aria-label="アートボード" value="1" />
        </div>
        <div class="nav">
          <button aria-label="次へ"><svg width="10" height="14"><path fill="#7c7c7c" d="M1 1L9 7L1 13z"/></svg></button>
          <button aria-label="最後へ"><svg width="14" height="14"><path fill="#7c7c7c" d="M1 1L9 7L1 13zM10 1h3v12h-3z"/></svg></button>
        </div>
        <div class="cur">選択</div>
        <button class="play" aria-label="表示項目"><svg width="10" height="14"><path fill="#d0d0d0" d="M1 1L9 7L1 13z"/></svg></button>
        <div class="hbar">
          <button aria-label="左へ">${chevron("left")}</button><span class="h1"></span><span class="hthumb"></span><span class="h2"></span>
          <button aria-label="右へ">${chevron("right")}</button>
        </div>
        <div class="corner"></div>
      </div>`;
  }
}

/* ------------------------------------------------------------------ */
@customElement("side-dock")
class SideDock extends LitElement {
  static styles = [base, css`
    :host { display: flex; background: #2e2e2e; padding: 1px 2px 0 4px; gap: 3px; }
    .col { width: 58px; background: var(--bg); display: flex; flex-direction: column; align-items: center; }
    .head { align-self: stretch; height: 18px; background: var(--dark); border-bottom: 1px solid #2e2e2e; display: flex; justify-content: flex-end; padding: 4px 8px 0 0; }
    .grip { margin: 5px 0 11px; }
    .note { align-self: stretch; height: 40px; border-bottom: 1px solid var(--line); align-content: start; padding-left: 4px; }
    .panel { width: 375px; background: var(--bg); display: flex; flex-direction: column; }
    .tabs { display: flex; height: 41px; background: var(--dark); align-items: stretch; font-size: 14px; color: #b0b0b0; font-weight: 300; }
    .tabs button { border-right: 1px solid var(--line); line-height: 34px; padding: 0 0 5px 2px; white-space: nowrap; }
    .p { width: 93px; } .l { width: 83px; } .c { width: 115px; }
    .tabs .on { background: var(--bg); color: #fff; font-weight: 400; }
    .tabs .m { flex: 1; border: 0; justify-items: end; padding: 0 8px 0 0; }
    .list { flex: 1; margin: 10px 7px 6px 8px; border: 1px solid var(--edge); border-radius: 2px; }
    .row { position: relative; display: flex; align-items: center; height: 30px; background: #4f657b; color: #fff; }
    .eye { width: 31px; height: 30px; border-right: 1px solid #475c70; }
    .mark { width: 5px; height: 27px; margin: 1px 40px 0 33px; background: #4f80ff; }
    .thumb { width: 25px; height: 25px; background: #fff; }
    .name { flex: 1; justify-items: start; margin-left: 9px; font-size: 18px; line-height: 28px; }
    .target { width: 54px; height: 30px; border-left: 1px solid #475c70; padding-right: 24px; }
    .row::after { content: ""; position: absolute; right: 0; top: 0; border-top: 9px solid #d8d8d8; border-left: 9px solid transparent; }
    .foot { display: flex; align-items: center; height: 25px; margin-bottom: 6px; padding: 0 30px 0 9px; color: #c8c8c8;
      font: 18px/24px "Noto Sans", "Noto Sans CJK JP", sans-serif; }
    .foot span { flex: 1; white-space: nowrap; }
    .foot button { width: 39px; color: #6c6c6c; }
    .foot .on { color: #c8c8c8; }
  `];
  render() {
    return html`
      <div class="col">
        <div class="head">${doubleChevron()}</div>${grip}
        <button class="note" aria-label="コメント"><svg width="28" height="28"><path fill="#c4c4c4" d="M5 1H23Q27 1 27 5V15Q27 19 23 19H14L6 27V19H5Q1 19 1 15V5Q1 1 5 1z"/></svg></button>
      </div>
      <div class="panel">
        <div class="head">${doubleChevron(true)}</div>
        <div class="tabs">
          <button class="p">プロパティ</button><button class="l on">レイヤー</button><button class="c">CC ライブラリ</button>
          <button class="m" aria-label="パネルメニュー"><svg width="16" height="12"><path fill="#a8a8a8" d="M0 0h16v1.6H0zM0 5h16v1.6H0zM0 10h16v1.6H0z"/></svg></button>
        </div>
        <div class="list">
          <div class="row">
            <button class="eye" aria-label="表示の切り替え"><svg width="20" height="14"><path fill="#c8c8c8" d="M1 7Q10-4 19 7Q10 17 1 7z"/><circle cx="10" cy="6.5" r="4" fill="#4f657b"/><circle cx="10" cy="6.5" r="2.5" fill="#c8c8c8"/></svg></button>
            <span class="mark"></span><span class="thumb"></span>
            <button class="name">レイヤー 1</button>
            <button class="target" aria-label="ターゲット"><svg width="14" height="14"><circle cx="7" cy="7" r="5.3" fill="none" stroke="#c8c8c8" stroke-width="1.5"/></svg></button>
          </div>
        </div>
        <div class="foot">
          <span>1 レイ …</span>
          <button aria-label="書き出し"><svg width="22" height="20" fill="none" stroke="currentColor" stroke-width="1.6"><path d="M8 4H3V18H17V12M10 11L19 2M13 2H19V8"/></svg></button>
          <button aria-label="オブジェクトの位置"><svg width="20" height="20" fill="none" stroke="currentColor"><circle cx="8" cy="8" r="6" stroke-width="1.7"/><path stroke-width="2.8" d="M12 12L18.5 18.5"/></svg></button>
          <button aria-label="クリッピングマスク"><svg width="20" height="20"><path fill="none" stroke="currentColor" stroke-width="1.3" d="M2 3H13V14H2zM7 7H18V18H7z"/><path fill="currentColor" d="M6 6h8v8H6z"/></svg></button>
          <button class="on" aria-label="サブレイヤー"><svg width="24" height="20" fill="none" stroke="currentColor" stroke-width="1.5"><path d="M10.5 5H22V17H10.5zM16.2 8V14M13.2 11H19.2M2 3V9H8M5.5 6L8.5 9L5.5 12"/></svg></button>
          <button class="on" aria-label="新規レイヤー"><svg width="18" height="18" fill="none" stroke="currentColor" stroke-width="1.5"><path d="M1.5 1.5H16.5V16.5H1.5zM9 5V13M5 9H13"/></svg></button>
          <button aria-label="削除"><svg width="18" height="20" fill="none" stroke="currentColor" stroke-width="1.5"><path d="M1 4.5H17M6 4V2H12V4M3 5L4 18H14L15 5M7 8V15.5M11 8V15.5"/></svg></button>
        </div>
      </div>`;
  }
}

/* ------------------------------------------------------------------ */
const APPS: { name: string; art: SVGTemplateResult; run?: "idle" | "active" }[] = [
  { name: "スタート", art: svg`<defs><linearGradient id="w" x1="0" y1="0" x2="1" y2="1"><stop offset="0" stop-color="#5fd4fb"/><stop offset="1" stop-color="#0a6fd0"/></linearGradient></defs><path fill="url(#w)" d="M2 1H17.2V17.2H1V2Q1 1 2 1zM18.8 1H34Q35 1 35 2V17.2H18.8zM1 18.8H17.2V35H2Q1 35 1 34zM18.8 18.8H35V34Q35 35 34 35H18.8z"/>` },
  { name: "検索", art: svg`<circle cx="20" cy="15" r="12.5" fill="#e6edef" stroke="#2b2b2b" stroke-width="3"/><path stroke="#2b2b2b" stroke-width="4" stroke-linecap="round" d="M11.5 24L4 33"/>` },
  { name: "タスクビュー", art: svg`<defs><linearGradient id="tv" x2="0" y2="1"><stop stop-color="#444"/><stop offset="1" stop-color="#181818"/></linearGradient></defs><rect x="1" y="10" width="26" height="25" rx="2" fill="url(#tv)"/><rect x="10" y="1" width="26" height="24" rx="2" fill="#f8f8f8"/><path fill="#bdbdbd" d="M10 10H27V25H12Q10 25 10 23z"/>` },
  { name: "チャット", art: svg`<defs><linearGradient id="ch" x2="0" y2="1"><stop stop-color="#8b6aa8"/><stop offset="1" stop-color="#5b58d0"/></linearGradient></defs><path fill="url(#ch)" d="M18 1A17 17 0 1 1 10 33L1 35L4 27A17 17 0 0 1 18 1z"/><rect x="8" y="11" width="14" height="14" rx="2.5" fill="#fff"/><path fill="#fff" d="M23.5 15.5L28 12V24L23.5 20.5z"/>` },
  { name: "Classi", art: svg`<rect width="36" height="36" fill="#214a7e"/><path fill="none" stroke="#fff" stroke-width="1.5" d="M16 18H8V3H28V18H23"/><path fill="#fff" d="M17 10h2.5v5l4 1.5v4l-1 2h-4.5l-3-4.5l2 .5z"/><text x="18" y="32" text-anchor="middle" font-size="12" font-weight="700" font-family="Lato, sans-serif" fill="#fff">Class<tspan fill="#3aa9f5">i</tspan></text>` },
  { name: "エクスプローラー", art: svg`<path fill="#d99a10" d="M0 3H11L14 6H35V14H0z"/><path fill="#fccb3c" d="M0 9H12L15 5.5H34Q36 5.5 36 7.5V35H0z"/><path fill="#1579c4" d="M6 35V28Q6 24 10 24H26Q30 24 30 28V35z"/><path stroke="#0b4f8c" stroke-width="1.5" d="M11 30H25"/>` },
  { name: "Word", art: svg`<path fill="#41a5ee" d="M8 2H36V10H8z"/><path fill="#2b7cd3" d="M8 10H36V18H8z"/><path fill="#185abd" d="M8 18H36V26H8z"/><path fill="#103f91" d="M8 26H36V34H8z"/><rect y="9" width="18" height="18" rx="2" fill="#185abd"/><text x="9" y="23" font-size="14" font-weight="700" font-family="Open Sans, sans-serif" text-anchor="middle" fill="#fff">W</text>` },
  { name: "Microsoft Store", art: svg`<defs><linearGradient id="ms" x2="0" y2="1"><stop stop-color="#0b68b8"/><stop offset="1" stop-color="#1d3c70"/></linearGradient></defs><path fill="none" stroke="#2fb4f0" stroke-width="2.2" d="M10 8V2H27V8"/><path fill="url(#ms)" d="M1 6H35V31Q35 35 31 35H5Q1 35 1 31z"/><path fill="#f25022" d="M10 13h7.5v7.5H10z"/><path fill="#7fba00" d="M18.7 13h7.5v7.5h-7.5z"/><path fill="#00a4ef" d="M10 21.5h7.5V29H10z"/><path fill="#ffb900" d="M18.7 21.5h7.5V29h-7.5z"/>` },
  { name: "IME", art: svg`<rect width="36" height="36" fill="#757575"/><path fill="#aeb8c6" d="M6 6H20V20H13L13 25L9 20H6z"/><text x="13" y="18" font-size="12" font-family="Noto Sans, sans-serif" text-anchor="middle" fill="#4472b8">A</text><path fill="#5b9be0" d="M18 16L26 13L30 18V29H16V20z"/><text x="23" y="27" font-size="10" font-weight="700" font-family="Noto Sans CJK JP, sans-serif" text-anchor="middle" fill="#fff">あ</text>` },
  { name: "Chrome", run: "idle", art: svg`<path fill="#dd4436" d="M18 18L3 9A17.5 17.5 0 0 1 33.2 9.5z"/><path fill="#fcc934" d="M18 18V9.5H33.2A17.5 17.5 0 0 1 18 35.5z"/><path fill="#259b4b" d="M18 35.5A17.5 17.5 0 0 1 2.8 9.3L11 22.5L25 22z"/><path fill="#fcc934" d="M25.5 22L17.5 35.5Q30 35.5 34 24z"/><circle cx="18" cy="18" r="8.8" fill="#fff"/><circle cx="18" cy="18" r="6.8" fill="#3b78e7"/>` },
  { name: "リンク", art: svg`<rect width="36" height="36" rx="3" fill="#fff"/><g transform="rotate(-48 18 18)" fill="none" stroke="#2390b0" stroke-width="2.8" stroke-linecap="round"><path d="M13 21.5H7.5A4 4 0 0 1 7.5 13.5H17A4 4 0 0 1 21 17.5"/><path d="M23 14.5H28.5A4 4 0 0 1 28.5 22.5H19A4 4 0 0 1 15 18.5"/><path d="M13 26H7A8.5 8.5 0 0 1 7 9H18M23 10H29A8.5 8.5 0 0 1 29 27H18"/></g>` },
  { name: "Illustrator", run: "active", art: svg`<rect x="1" y="1" width="34" height="33" rx="5" fill="#330000"/><text x="18" y="24" font-size="19" font-weight="700" font-family="Open Sans, sans-serif" text-anchor="middle" fill="#ff9a00">Ai</text>` },
];

@customElement("task-bar")
class TaskBar extends LitElement {
  static styles = [base, css`
    :host { display: grid; grid-template-columns: 1fr auto 1fr; align-items: start; height: 72px; color: #1a1a1a;
      background: linear-gradient(90deg, #f1ecec 0%, #eeeaec 8%, #dbe7ec 20%, #d8e6ec 34%, #e1eaee 40%, #e2ebed 55%, #dfe1e1 70%, #e4e4e4 80%, #eee9eb 88%, #efeaec 100%);
      border-top: 1px solid #c8ccce; font-family: "Noto Sans", "Noto Sans CJK JP", sans-serif; }
    .weather { display: flex; align-items: center; gap: 14px; padding: 12px 0 0 33px; justify-self: start; text-align: left; }
    .weather span { display: grid; font-size: 16px; line-height: 23px; }
    .weather small { font-size: 16px; color: #5a5a5a; }
    .apps { display: flex; gap: 10px; padding-top: 7px; }
    .app { position: relative; width: 56px; height: 57px; border-radius: 5px; padding-bottom: 2px; }
    .app.active { background: #f3f3f3; }
    .app::after { position: absolute; bottom: 0; height: 5px; border-radius: 3px; }
    .app.idle::after { content: ""; width: 10px; background: #80868a; }
    .app.active::after { content: ""; width: 24px; background: #5f7a87; }
    .tray { justify-self: end; display: flex; align-items: center; padding: 11px 30px 0 0; }
    .tray .clock { display: grid; justify-items: end; font-size: 17px; line-height: 23px; margin: 0 18px 0 21px; }
    .ime { margin: 0 26px 0 30px; }
    .quick { display: flex; gap: 12px; }
    .badge { width: 24px; height: 24px; border-radius: 50%; background: #5f7a87; color: #fff; font-size: 17px; line-height: 24px; }
  `];
  render() {
    return html`
      <button class="weather"><svg width="30" height="30"><defs><linearGradient id="sun" x2="1" y2="1"><stop stop-color="#f6c443"/><stop offset="1" stop-color="#ee6a0a"/></linearGradient></defs><circle cx="15" cy="15" r="15" fill="url(#sun)"/></svg>
        <span>14°C<small>晴れ</small></span></button>
      <div class="apps">${APPS.map((a) => html`<button class="app ${a.run ?? ""}" aria-label=${a.name}><svg width="36" height="36" viewBox="0 0 36 36">${a.art}</svg></button>`)}</div>
      <div class="tray">
        <button aria-label="隠れているインジケーター"><svg width="20" height="12"><path fill="none" stroke="#1a1a1a" stroke-width="1.6" d="M1.5 10.5L10 2L18.5 10.5"/></svg></button>
        <button class="ime" aria-label="入力モード"><svg width="18" height="26"><path fill="none" stroke="#1a1a1a" stroke-width="1.8" d="M.8 25L9 2L17.2 25M4 17H14"/></svg></button>
        <button class="quick" aria-label="クイック設定">
          <svg width="24" height="20" fill="none" stroke="#1a1a1a" stroke-width="1.7"><path d="M1 8Q12-4 23 8M4.5 11.5Q12 4 19.5 11.5M8 15Q12 11 16 15"/><circle cx="12" cy="17" r="1.6" fill="#1a1a1a" stroke="none"/></svg>
          <svg width="24" height="18" fill="none" stroke="#1a1a1a" stroke-width="1.5"><path d="M1.5 6H5L10 1.5V16.5L5 12H1.5zM14.5 5L22.5 13M22.5 5L14.5 13"/></svg>
          <svg width="26" height="16"><rect x="1" y="1" width="20" height="14" rx="3" fill="none" stroke="#1a1a1a" stroke-width="1.7"/><path fill="#1a1a1a" d="M3.5 3.5h6v9h-6zM22 5.5h1.5l1 1v3l-1 1H22z"/></svg>
        </button>
        <button class="clock"><span>12:14</span><span>2022/11/10</span></button>
        <button class="badge">1</button>
      </div>`;
  }
}

/* ------------------------------------------------------------------ */
@customElement("app-root")
class AppRoot extends LitElement {
  @property({ type: Boolean }) drawer = true;
  static styles = [base, css`
    :host { display: flex; flex-direction: column; height: 100vh; --panel-w: 386px; background: var(--bg); overflow: hidden; }
    .work { position: relative; flex: 1; min-height: 0; display: flex; }
    document-view { flex: 1; }
    all-tools { position: absolute; z-index: 1; left: 108px; top: 0; bottom: 5px; width: var(--panel-w); }
  `];
  render() {
    return html`
      <menu-bar></menu-bar>
      <div class="work">
        <tool-bar></tool-bar>
        <document-view></document-view>
        <side-dock></side-dock>
        ${this.drawer ? html`<all-tools></all-tools>` : nothing}
      </div>
      <task-bar></task-bar>`;
  }
}
